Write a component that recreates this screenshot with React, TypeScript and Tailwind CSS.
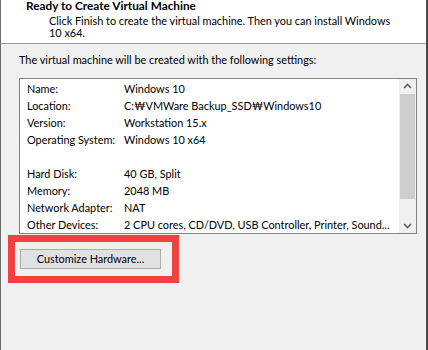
import React from 'react';

const rows: [string, string][] = [
  ['Name:', 'Windows 10'],
  ['Location:', 'C:₩VMWare Backup_SSD₩Windows10'],
  ['Version:', 'Workstation 15.x'],
  ['Operating System:', 'Windows 10 x64'],
  ['', ''],
  ['Hard Disk:', '40 GB, Split'],
  ['Memory:', '2048 MB'],
  ['Network Adapter:', 'NAT'],
  ['Other Devices:', '2 CPU cores, CD/DVD, USB Controller, Printer, Sound...'],
];

function ScrollBar() {
  return (
    <div className="w-[17px] h-full bg-[#f0f0f0] flex flex-col items-center">
      <div className="h-[17px] w-full flex items-center justify-center">
        <svg width="9" height="6" viewBox="0 0 9 6">
          <path d="M1 5 L4.5 1.5 L8 5" stroke="#606060" strokeWidth="1.6" fill="none" />
        </svg>
      </div>
      <div className="flex-1 w-full px-[1px] pb-[20px]">
        <div className="w-full h-[105px] bg-[#cdcdcd]" />
      </div>
      <div className="h-[17px] w-full flex items-center justify-center">
        <svg width="9" height="6" viewBox="0 0 9 6">
          <path d="M1 1 L4.5 4.5 L8 1" stroke="#606060" strokeWidth="1.6" fill="none" />
        </svg>
      </div>
    </div>
  );
}

export default function App() {
  return (
    <div className="w-[428px] h-[350px] overflow-hidden bg-[#f0f0f0] border-l border-l-[#6d6d6d] border-r-2 border-r-[#4a4a4a] font-['Lato','Noto_Sans_CJK_KR',sans-serif] text-[10.9px] text-black">
      <div className="h-[44px] flex flex-col bg-white border-b border-[#a0a0a0]">
        <div className="pl-[25px] -mt-[2px] font-bold text-[11.8px] leading-[16px]">Ready to Create Virtual Machine</div>
        <div className="pl-[48px] leading-[12px] mt-[1px]">
          Click Finish to create the virtual machine. Then you can install Windows
          <br />
          10 x64.
        </div>
      </div>
      <div className="pl-[18px] pt-[8px] leading-[16px]">The virtual machine will be created with the following settings:</div>
      <div className="ml-[18px] mt-[10px] w-[398px] h-[156px] bg-white border border-[#828282] flex">
        <div className="flex-1 pl-[7px] pt-[2px]">
          {rows.map(([k, v], i) => (
            <div key={i} className="flex h-[17px] items-center whitespace-nowrap">
              <div className="w-[97px]">{k}</div>
              <div>{v}</div>
            </div>
          ))}
        </div>
        <ScrollBar />
      </div>
      <div className="ml-[7px] mt-[1px] w-[171px] h-[48px] border-[7px] border-[#f24141] pl-[5px] pt-[7px]">
        <div className="w-[141px] h-[20px] bg-[#e1e1e1] border border-[#adadad] flex items-center justify-center">
          Customize Hardware...
        </div>
      </div>
    </div>
  );
}
